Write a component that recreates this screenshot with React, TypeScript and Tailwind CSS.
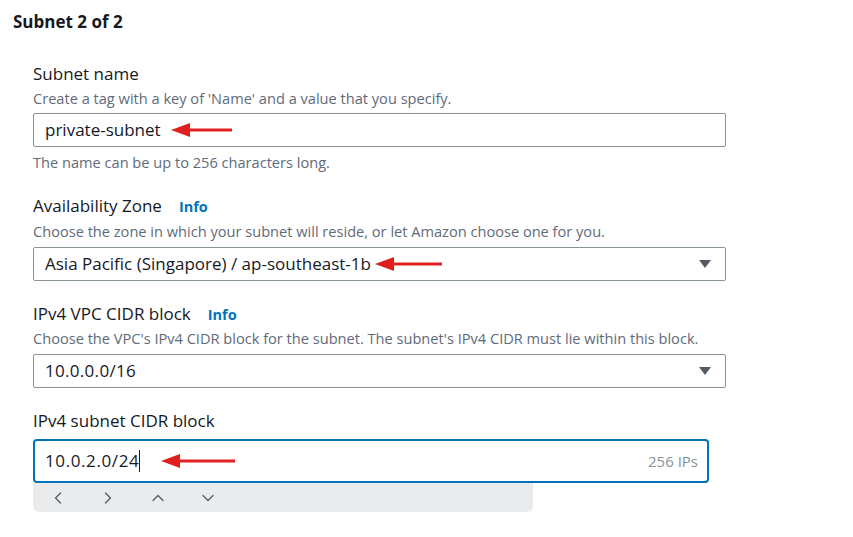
import { ChevronLeft, ChevronRight, ChevronUp, ChevronDown } from "lucide-react";

function RedArrow({ length }: { length: number }) {
    return (
        <svg width={length} height={16} viewBox={`0 0 ${length} 16`} className="shrink-0">
            <line x1={14} y1={8} x2={length} y2={8} stroke="#e0201f" strokeWidth={3}/>
            <polygon points={`0,8 19,1 19,15`} fill="#e0201f"/>
        </svg>
    );
}

function Label({ text, info }: { text: string; info?: boolean }) {
    return (
        <div className="flex items-baseline h-[22px] text-[17px] leading-[22px] text-[#16191f]">
            <span>{text}</span>
            {info && <span className="ml-[17px] text-[14.5px] font-bold text-[#0073bb]">Info</span>}
        </div>
    );
}

function Desc({ text }: { text: string }) {
    return <div className="h-[20px] text-[14.6px] leading-[20px] text-[#5f6b7a] whitespace-nowrap">{text}</div>;
}

function Caret() {
    return (
        <svg width="12" height="9" viewBox="0 0 12 9" className="shrink-0">
            <polygon points="0,0 12,0 6,8" fill="#545b64"/>
        </svg>
    );
}

export default function App() {
    return (
        <div className="w-[853px] h-[537px] bg-white pt-[10px] pl-[13px] font-['Open_Sans',sans-serif] overflow-hidden">
            <h2 className="text-[17px] leading-[24px] font-bold text-[#16191f]">Subnet 2 of 2</h2>

            <div className="pl-[20px] mt-[29px] w-[725px]">
                <Label text="Subnet name"/>
                <div className="mt-[3px]"><Desc text="Create a tag with a key of 'Name' and a value that you specify."/></div>
                <div className="mt-[5px] h-[34px] border border-[#879596] rounded-[2px] flex items-center pl-[11px] text-[17px] text-[#16191f] w-[693px]">
                    <span>private-subnet</span>
                    <span className="ml-[10px] flex"><RedArrow length={61}/></span>
                </div>
                <div className="mt-[5px]"><Desc text="The name can be up to 256 characters long."/></div>

                <div className="mt-[23px]"><Label text="Availability Zone" info/></div>
                <div className="mt-[4px]"><Desc text="Choose the zone in which your subnet will reside, or let Amazon choose one for you."/></div>
                <div className="mt-[6px] h-[34px] border border-[#879596] rounded-[2px] flex items-center pl-[11px] pr-[14px] text-[17px] text-[#16191f] w-[693px]">
                    <span>Asia Pacific (Singapore) / ap-southeast-1b</span>
                    <span className="ml-[4px] flex"><RedArrow length={67}/></span>
                    <span className="ml-auto flex"><Caret/></span>
                </div>

                <div className="mt-[22px]"><Label text="IPv4 VPC CIDR block" info/></div>
                <div className="mt-[3px]"><Desc text="Choose the VPC's IPv4 CIDR block for the subnet. The subnet's IPv4 CIDR must lie within this block."/></div>
                <div className="mt-[6px] h-[34px] border border-[#879596] rounded-[2px] flex items-center pl-[11px] pr-[14px] text-[17px] text-[#16191f] w-[693px]">
                    <span className="tracking-[0.3px]">10.0.0.0/16</span>
                    <span className="ml-auto flex"><Caret/></span>
                </div>

                <div className="mt-[22px]"><Label text="IPv4 subnet CIDR block"/></div>
                <div className="mt-[7px] w-[676px] h-[44px] border-2 border-[#0073bb] rounded-[4px] flex items-center pl-[10px] pr-[9px] text-[17px] text-[#16191f] relative z-10 bg-white">
                    <span className="tracking-[0.6px]">10.0.2.0/24</span>
                    <span className="w-px h-[22px] bg-[#16191f]"/>
                    <span className="ml-[21px] flex"><RedArrow length={74}/></span>
                    <span className="ml-auto text-[15px] text-[#879596]">256 IPs</span>
                </div>
                <div className="w-[500px] h-[29px] bg-[#e9ebed] rounded-b-[6px] flex items-center pl-[15px] gap-[30px] text-[#545b64]">
                    <ChevronLeft size={20} strokeWidth={1.5}/>
                    <ChevronRight size={20} strokeWidth={1.5}/>
                    <ChevronUp size={20} strokeWidth={1.5}/>
                    <ChevronDown size={20} strokeWidth={1.5}/>
                </div>
            </div>
        </div>
    );
}
